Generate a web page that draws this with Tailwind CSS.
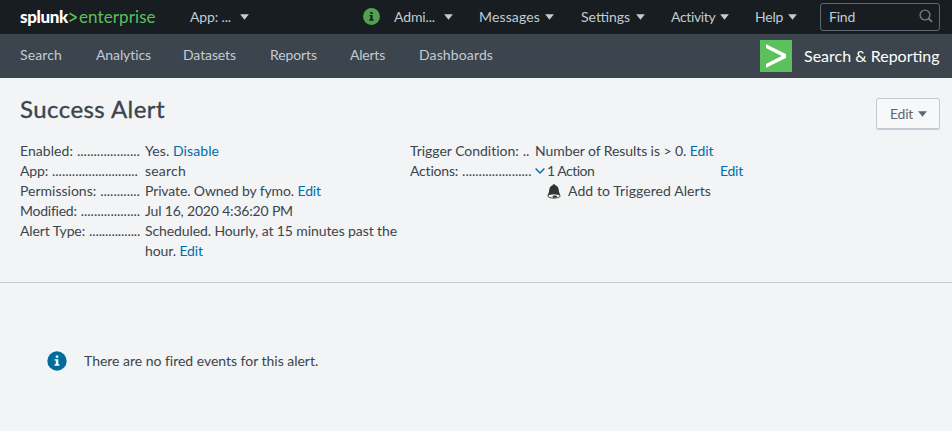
<!DOCTYPE html>
<html lang="en">
<head>
<meta charset="utf-8">
<title>Success Alert | Splunk</title>
<script src="https://cdn.jsdelivr.net/npm/@tailwindcss/browser@4"></script>
</head>
<body class="h-[431px] w-[952px] overflow-hidden bg-[#f2f4f5] font-['Lato','Liberation_Sans',sans-serif] text-[14px] leading-5 text-[#3c444d]">
<svg class="hidden">
  <symbol id="caret" viewBox="0 0 9 6"><path d="M0.1 0.3H8.9L4.5 5.8Z" fill="currentColor"/></symbol>
</svg>
<header class="flex h-[34px] items-center bg-[#171d21] pl-5 whitespace-nowrap text-[#c3cbd4]">
  <a class="flex w-[170px] items-center text-[17px] leading-[34px]">
    <span class="w-[49px] font-black tracking-[-0.35px] text-white">splunk</span>
    <svg class="mr-[2px] h-[11px] w-[8px] shrink-0" viewBox="0 0 8 11"><path d="M0.5 1.3L7 5V5.7L0.5 9.3" fill="none" stroke="#5cc05c" stroke-width="1.6"/></svg>
    <span class="tracking-[0.1px] text-[#5cc05c]">enterprise</span>
  </a>
  <nav class="flex items-center pb-px">
    <a class="flex w-[173px] items-center"><span class="w-[50px] tracking-[-0.14px]">App: ...</span><svg class="h-[6px] w-[9px]"><use href="#caret"/></svg></a>
    <a class="flex w-[117px] items-center">
      <svg class="mr-[14px] h-[17px] w-[17px]" viewBox="0 0 17 17"><circle cx="8.5" cy="8.5" r="8.4" fill="#53a051"/><path d="M7.4 4.1H9.6V6H7.4ZM6.5 7H9.6V11.3H10.6V12.7H6.3V11.3H7.4V8.3H6.5Z" fill="#171d21"/></svg>
      <span class="w-[50px] tracking-[-0.14px]">Admi...</span><svg class="h-[6px] w-[9px]"><use href="#caret"/></svg></a>
    <a class="-ml-px flex w-[102px] items-center"><span class="w-[66px] tracking-[0.14px]">Messages</span><svg class="h-[6px] w-[9px]" viewBox="0 0 9 6"><use href="#caret"/></svg></a>
    <a class="flex w-[90px] items-center"><span class="w-[55px]">Settings</span><svg class="h-[6px] w-[9px]"><use href="#caret"/></svg></a>
    <a class="flex w-[84px] items-center"><span class="w-[49px] tracking-[-0.35px]">Activity</span><svg class="h-[6px] w-[9px]"><use href="#caret"/></svg></a>
    <a class="flex w-[65px] items-center"><span class="w-[33px] tracking-[-0.2px]">Help</span><svg class="h-[6px] w-[9px]"><use href="#caret"/></svg></a>
  </nav>
  <div class="flex h-[28px] w-[120px] items-center justify-between rounded-[3px] border border-[#5c6773] pr-[6px] pl-2">
    <span class="pb-px tracking-[-0.2px]">Find</span>
    <svg class="mb-[2px] h-[14px] w-[14px]" viewBox="0 0 14 14" fill="none" stroke="#6f7b88" stroke-width="1.4"><circle cx="6" cy="6" r="4.9"/><path d="M9.5 9.5L13 12.8" stroke-width="1.8"/></svg>
  </div>
</header>
<div class="flex h-[44px] items-center bg-[#3c444d] pl-5 whitespace-nowrap text-[#c3cbd4]">
  <nav class="flex w-[740px] pb-[2px]">
    <a class="w-[76px] tracking-[0.13px]">Search</a>
    <a class="w-[87px] tracking-[-0.1px]">Analytics</a>
    <a class="w-[87px] tracking-[-0.1px]">Datasets</a>
    <a class="w-[80px] tracking-[-0.1px]">Reports</a>
    <a class="w-[69px] tracking-[-0.22px]">Alerts</a>
    <a class="tracking-[0.13px]">Dashboards</a>
  </nav>
  <svg class="mr-3 h-[32px] w-[32px]" viewBox="0 0 32 32"><rect width="32" height="32" fill="#5cc05c"/><path d="M6 4.3L26 14V18L6 27.7V23.9L21.6 16L6 8.1Z" fill="#fff"/></svg>
  <span class="pb-px text-[16px] text-white">Search &amp; Reporting</span>
</div>
<main>
  <section class="h-[205px] border-b border-[#c3cbd4] pr-3 pl-5 whitespace-nowrap">
    <div class="flex h-[63px] justify-between">
      <h1 class="mt-[16px] text-[24px] leading-[30px] tracking-[0.44px] [-webkit-text-stroke:0.35px_#3c444d]">Success Alert</h1>
      <button class="mt-[20px] flex h-[32px] w-[64px] items-center rounded-[3px] border border-b-2 border-[#c3cbd4] bg-[#f7f8fa] pl-[13px] text-[#5c6773]"><span class="w-[28px] text-left tracking-[-0.25px]">Edit</span><svg class="h-[6px] w-[9px]"><use href="#caret"/></svg></button>
    </div>
    <div class="flex">
      <dl class="grid w-[390px] grid-cols-[120px_252px] content-start gap-x-[5px]">
        <dt class="flex gap-1"><span class="shrink-0 tracking-[0.06px]">Enabled:</span><span>...................</span></dt>
        <dd><span class="tracking-[0.09px]">Yes. <a class="text-[#006eaa]">Disable</a></span></dd>
        <dt class="flex gap-1"><span class="shrink-0 tracking-[-0.16px]">App:</span><span>..........................</span></dt>
        <dd class="tracking-[0.2px]">search</dd>
        <dt class="flex gap-1"><span class="shrink-0">Permissions:</span><span>............</span></dt>
        <dd class="tracking-[-0.12px]">Private. Owned by fymo. <a class="text-[#006eaa]">Edit</a></dd>
        <dt class="flex gap-1"><span class="shrink-0 tracking-[-0.25px]">Modified:</span><span>..................</span></dt>
        <dd class="tracking-[-0.18px]">Jul 16, 2020 4:36:20 PM</dd>
        <dt class="flex gap-1"><span class="shrink-0 tracking-[-0.13px]">Alert Type:</span><span class="tracking-[-0.1px]">................</span></dt>
        <dd class="tracking-[-0.1px]">Scheduled. Hourly, at 15 minutes past the<br>hour. <a class="text-[#006eaa]">Edit</a></dd>
      </dl>
      <dl class="grid grid-cols-[120px_208px] content-start gap-x-[5px]">
        <dt class="flex gap-1"><span class="shrink-0 tracking-[-0.03px]">Trigger Condition:</span><span>..</span></dt>
        <dd class="tracking-[-0.08px]">Number of Results is &gt; 0. <a class="text-[#006eaa]">Edit</a></dd>
        <dt class="flex gap-1"><span class="shrink-0 tracking-[-0.2px]">Actions:</span><span>.....................</span></dt>
        <dd>
          <div class="flex items-center">
            <svg class="mr-[2px] h-[6px] w-[10px]" viewBox="0 0 10 6"><path d="M0.6 0.6L5 5L9.4 0.6" fill="none" stroke="#006eaa" stroke-width="1.4"/></svg>
            <span class="tracking-[-0.5px]">1 Action</span>
            <a class="ml-auto tracking-[-0.25px] text-[#006eaa]">Edit</a>
          </div>
          <div class="flex items-center pl-[12px]">
            <svg class="mr-[7px] h-[15px] w-[14px]" viewBox="0 0 14 15"><path d="M7 0.2C7.8 0.2 8.3 0.7 8.4 1.3C10.6 1.9 11.5 3.7 11.7 5.8C11.9 7.9 12.3 9.6 13.4 11H0.6C1.7 9.6 2.1 7.9 2.3 5.8C2.5 3.7 3.4 1.9 5.6 1.3C5.7 0.7 6.2 0.2 7 0.2Z" fill="#333"/><ellipse cx="7" cy="12" rx="6.2" ry="2.1" fill="#f2f4f5" stroke="#444" stroke-width="1"/><ellipse cx="7.8" cy="12.6" rx="2.3" ry="1.2" fill="#333"/></svg>
            <span class="tracking-[0.08px]">Add to Triggered Alerts</span>
          </div>
        </dd>
      </dl>
    </div>
  </section>
  <section class="flex h-[148px] items-center pt-[8px] pl-[47px]">
    <svg class="mr-[17px] h-[20px] w-[20px]" viewBox="0 0 20 20"><circle cx="10" cy="10" r="9.7" fill="#006d9c"/><path d="M8.8 4.6H11.3V6.8H8.8ZM7.6 8.2H11.3V13.2H12.4V14.7H7.5V13.2H8.8V9.6H7.6Z" fill="#fff"/></svg>
    <span class="pb-px tracking-[-0.02px]">There are no fired events for this alert.</span>
  </section>
</main>
</body>
</html>
